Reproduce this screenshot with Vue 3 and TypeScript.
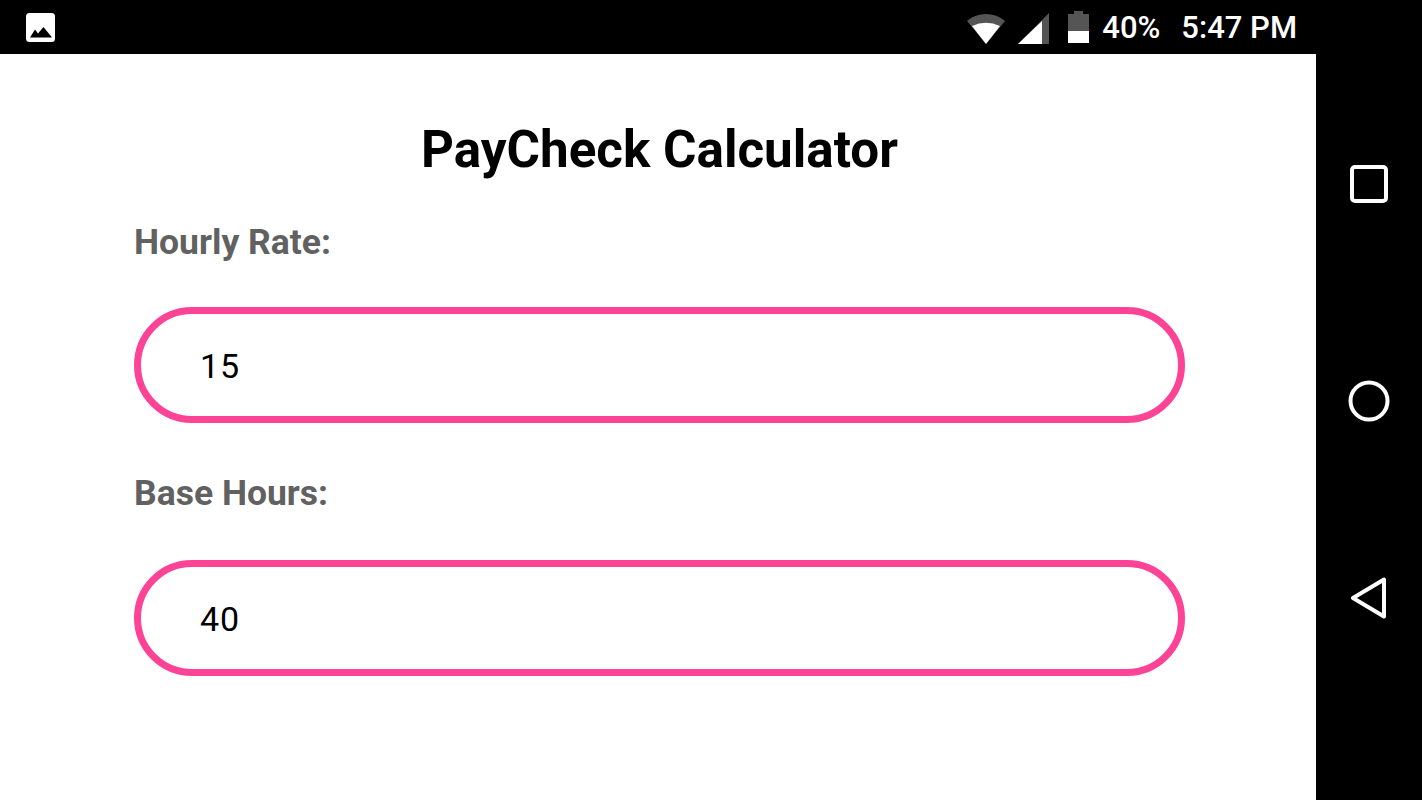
<script setup lang="ts">
const fields = [
  { label: 'Hourly Rate:', value: '15' },
  { label: 'Base Hours:', value: '40' },
]
</script>

<template>
  <div class="device">
    <div class="screen">
      <header class="status">
        <svg class="pic" viewBox="0 0 29 29" width="29" height="29">
          <rect x="0" y="0" width="29" height="29" rx="3.5" fill="#fff" />
          <path d="M4 24.5 L9 16.5 L12 20.5 L17.5 14 L26 24.5 Z" fill="#000" />
        </svg>
        <div class="status-right">
          <svg class="wifi" viewBox="0 0 38 30" width="38" height="30">
            <path d="M0 7 A29.3 29.3 0 0 1 38 7 L19 30 Z" fill="#555" />
            <path d="M5 12 A34 34 0 0 1 33 12 L19 30 Z" fill="#fff" />
          </svg>
          <svg class="signal" viewBox="0 0 31 31" width="31" height="31">
            <path d="M31 0 L0 31 L31 31 Z" fill="#555" />
            <path d="M24 8 L0 31 L24 31 Z" fill="#fff" />
          </svg>
          <svg class="battery" viewBox="0 0 21 32" width="21" height="32">
            <path d="M6 3 V0 H15 V3 H21 V32 H0 V3 Z" fill="#555" />
            <rect x="0" y="20" width="21" height="12" fill="#fff" />
          </svg>
          <span class="pct">40%</span>
          <span class="time">5:47 PM</span>
        </div>
      </header>
      <main class="content">
        <h1 class="title">PayCheck Calculator</h1>
        <section v-for="f in fields" :key="f.label" class="field">
          <label class="label">{{ f.label }}</label>
          <input class="input" type="text" :value="f.value" />
        </section>
      </main>
    </div>
    <nav class="nav">
      <svg viewBox="0 0 38 38" width="38" height="38">
        <rect x="2" y="2" width="34" height="34" rx="3" fill="none" stroke="#fff" stroke-width="4" />
      </svg>
      <svg viewBox="0 0 42 42" width="42" height="42">
        <circle cx="21" cy="21" r="18.5" fill="none" stroke="#fff" stroke-width="4" />
      </svg>
      <svg viewBox="0 0 38 42" width="38" height="42">
        <path d="M3 21 L34 2.5 V39.5 Z" fill="none" stroke="#fff" stroke-width="4" stroke-linejoin="round" />
      </svg>
    </nav>
  </div>
</template>

<style>
html, body { margin: 0; background: #000; }
</style>

<style scoped>
.device {
  display: flex;
  width: 1422px;
  height: 800px;
  overflow: hidden;
  font-family: Roboto, "Liberation Sans", sans-serif;
  background: #000;
}
.screen {
  display: flex;
  flex-direction: column;
  width: 1316px;
  background: #fff;
}
.status {
  display: flex;
  align-items: center;
  justify-content: space-between;
  height: 54px;
  flex: none;
  padding: 0 19px 0 26px;
  box-sizing: border-box;
  background: #000;
  color: #fff;
}
.status-right {
  display: flex;
  align-items: center;
  font-size: 31px;
  font-weight: 500;
}
.wifi { margin-right: 13px; margin-top: 3px; }
.signal { margin-right: 19px; margin-top: 3px; }
.battery { margin-right: 13px; }
.pct { margin-right: 21px; }
.content {
  display: flex;
  flex-direction: column;
  padding: 0 131px 0 134px;
}
.title {
  margin: 66px 0 0;
  height: 60px;
  line-height: 60px;
  font-size: 51.2px;
  font-weight: 700;
  text-align: center;
  color: #000;
}
.field {
  display: flex;
  flex-direction: column;
}
.label {
  margin-top: 40px;
  height: 44px;
  line-height: 44px;
  font-size: 35.5px;
  font-weight: 700;
  color: #616161;
}
.field + .field .label { margin-top: 48px; }
.input {
  display: block;
  width: 100%;
  height: 116px;
  margin-top: 43px;
  padding: 2px 59px 0;
  box-sizing: border-box;
  border: 7px solid #fd4395;
  border-radius: 58px;
  outline: none;
  background: #fff;
  font-family: inherit;
  font-size: 34px;
  letter-spacing: 1px;
  color: #000;
}
.field + .field .input { margin-top: 45px; }
.nav {
  display: flex;
  flex-direction: column;
  align-items: center;
  width: 106px;
  padding-top: 165px;
  box-sizing: border-box;
}
.nav svg:nth-child(2) { margin-top: 177px; }
.nav svg:nth-child(3) { margin-top: 155px; }
</style>
